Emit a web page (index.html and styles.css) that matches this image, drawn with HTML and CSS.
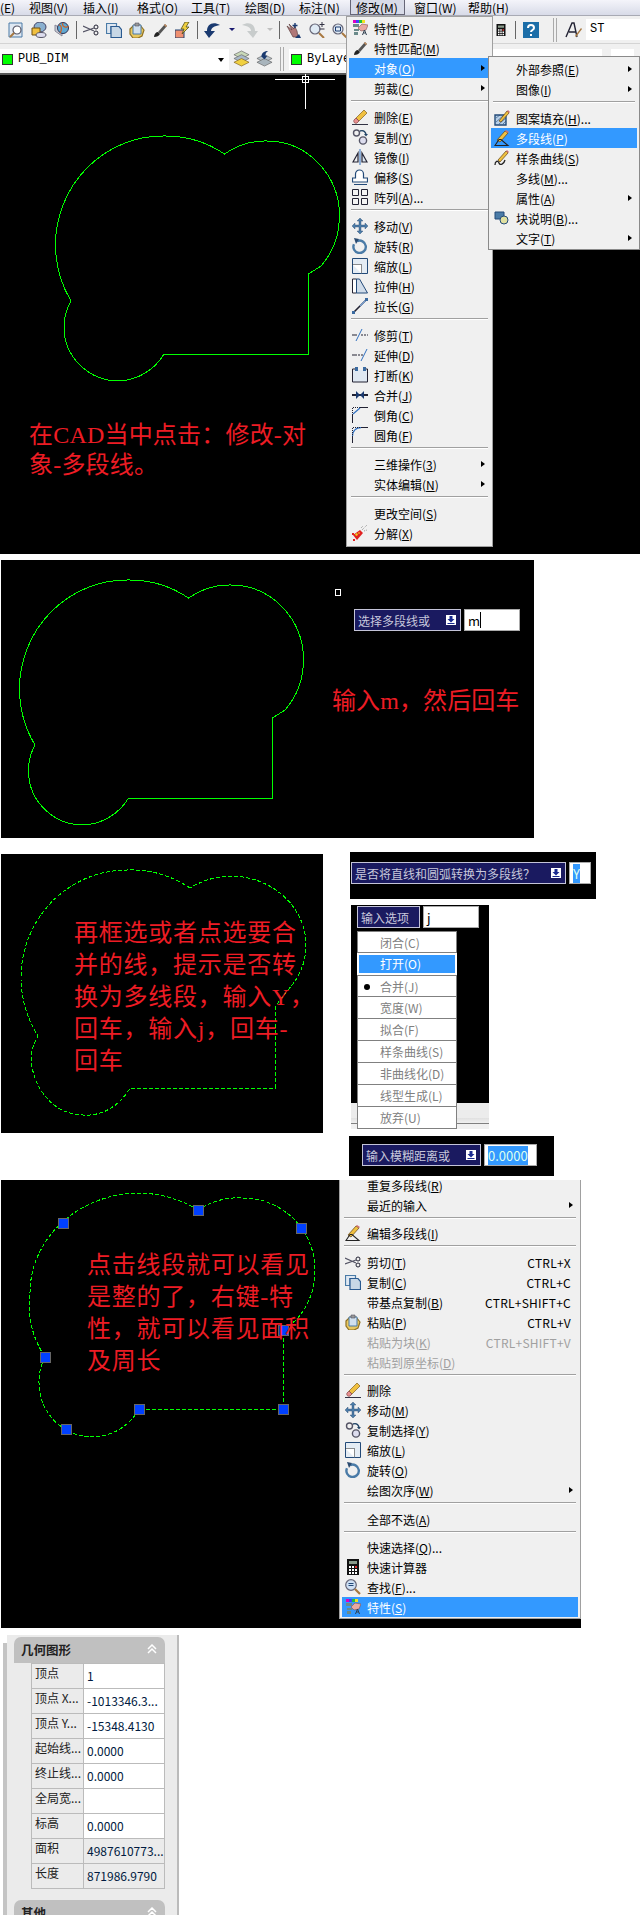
FILE: index.html
```html
<!DOCTYPE html>
<html lang="zh-CN">
<head>
    <meta charset="UTF-8">
    <meta name="viewport" content="width=device-width, initial-scale=1.0">
    <title>CAD 多段线合并</title>
    <link rel="stylesheet" href="styles.css">
</head>
<body>
    <svg class="icon-defs" xmlns="http://www.w3.org/2000/svg">
        <symbol id="i-props" viewBox="0 0 16 16">
            <rect x="1" y="0" width="3" height="3" fill="#e000c0"/><rect x="4" y="0" width="3" height="3" fill="#4040ff"/><rect x="7" y="0" width="3" height="3" fill="#20c040"/><rect x="10" y="0" width="3" height="3" fill="#f0e020"/>
            <path d="M1 4h6v3H1zM2 9h5v2H2zM2 12h4v3H2z" fill="#6a8a8a"/>
            <path d="M6 8l4-4 6 1-2 5-5 1z" fill="#e8a8a0" stroke="#805050" stroke-width=".6"/>
            <path d="M10.5 15l2-5 2 5M11.5 13h2" fill="none" stroke="#304050" stroke-width="1"/>
        </symbol>
        <symbol id="i-brush" viewBox="0 0 16 16">
            <path d="M2 15c0-3 2-5 4-5l2 2c-1 2-3 3-6 3z" fill="#222"/>
            <path d="M6 10l7-8 2 2-7 8z" fill="#555"/><path d="M12 3l1-1 2 2-1 1z" fill="#c89060"/>
        </symbol>
        <symbol id="i-erase" viewBox="0 0 16 16">
            <path d="M4 9l8-8 3 3-8 8z" fill="#f0c040" stroke="#806020" stroke-width=".7"/>
            <path d="M2 11l2-2 3 3-2 2c-2 1-4-1-3-3z" fill="#e89090" stroke="#804040" stroke-width=".7"/>
            <path d="M0 15.5h16" stroke="#334" stroke-width="1"/>
        </symbol>
        <symbol id="i-copyobj" viewBox="0 0 16 16">
            <circle cx="4.5" cy="4" r="3" fill="none" stroke="#556" stroke-width="1.4"/>
            <circle cx="11" cy="11.5" r="3.6" fill="#dde" stroke="#556" stroke-width="1.4"/>
            <path d="M8 2c3-1 5 0 6 3" fill="none" stroke="#246" stroke-width="1.4"/><path d="M12 5h4l-2 2.5z" fill="#246"/>
        </symbol>
        <symbol id="i-mirror" viewBox="0 0 16 16">
            <path d="M1 13L6 4v9z" fill="none" stroke="#223" stroke-width="1.2"/>
            <path d="M15 13L10 4v9z" fill="#dde6f0" stroke="#223" stroke-width="1.2"/>
            <path d="M8 0v16" stroke="#3070c0" stroke-width="1"/>
        </symbol>
        <symbol id="i-offset" viewBox="0 0 16 16">
            <path d="M.5 13V9h3V5a4 4 0 0 1 8 0v4h4v4z" fill="#fff" stroke="#234a78" stroke-width="1.2"/>
            <path d="M2 15.5h13" stroke="#234a78" stroke-width="1"/>
        </symbol>
        <symbol id="i-array" viewBox="0 0 16 16">
            <path d="M.5.5h6v6h-6zM9.5.5h6v6h-6zM.5 9.5h6v6h-6zM9.5 9.5h6v6h-6z" fill="#f4f4f4" stroke="#223" stroke-width="1"/>
        </symbol>
        <symbol id="i-move" viewBox="0 0 16 16">
            <path d="M8 0l3 3H9v4h4V5l3 3-3 3V9H9v4h2l-3 3-3-3h2V9H3v2L0 8l3-3v2h4V3H5z" fill="#4a7ba7" stroke="#2a4a70" stroke-width=".4"/>
        </symbol>
        <symbol id="i-rotate" viewBox="0 0 16 16">
            <path d="M5 3.2a6.2 6.2 0 1 1-3 3" fill="none" stroke="#4a7ba7" stroke-width="2.4"/>
            <path d="M2 0l5 1-3 5z" fill="#2a4a70"/>
        </symbol>
        <symbol id="i-scale" viewBox="0 0 16 16">
            <path d="M.5.5h15v15H.5z" fill="#e4ecf4" stroke="#234a78"/>
            <path d="M.5 6.5h9v9" fill="#fff" stroke="#222" stroke-dasharray="1 1"/>
        </symbol>
        <symbol id="i-stretch" viewBox="0 0 16 16">
            <path d="M.5 1h4v14h-4z" fill="#fff" stroke="#223"/>
            <path d="M4.5 1h3l8 14h-11z" fill="#d0dcea" stroke="#234a78"/>
        </symbol>
        <symbol id="i-length" viewBox="0 0 16 16">
            <path d="M2 14L14 2" stroke="#223" stroke-width="1.6"/><path d="M8 8l6-6" stroke="#7aa0d0" stroke-width="1.6"/>
            <path d="M0 13h3v3H0zM13 0h3v3h-3z" fill="#3a6aa0"/>
        </symbol>
        <symbol id="i-trim" viewBox="0 0 16 16">
            <path d="M0 8h5" stroke="#223"/><path d="M4 14L10 2" stroke="#3070c0"/><path d="M9 8h7" stroke="#223" stroke-dasharray="2 1"/>
        </symbol>
        <symbol id="i-extend" viewBox="0 0 16 16">
            <path d="M0 8h5" stroke="#223"/><path d="M6 8h5" stroke="#223" stroke-dasharray="2 1"/><path d="M9 14L15 2" stroke="#3070c0"/>
        </symbol>
        <symbol id="i-break" viewBox="0 0 16 16">
            <path d="M1 3h14v12H1z" fill="#dfe8f2"/><path d="M3 2H.5v13h15V2H13" fill="none" stroke="#223"/>
            <path d="M3 0h3v4H3zM11 0h3v4h-3z" fill="#3a6aa0"/>
        </symbol>
        <symbol id="i-join" viewBox="0 0 16 16">
            <path d="M0 8h16" stroke="#223" stroke-width="2"/><path d="M4 4l4 4-4 4zM12 4L8 8l4 4z" fill="#1a3a70"/>
        </symbol>
        <symbol id="i-chamfer" viewBox="0 0 16 16">
            <path d="M.5 16V8M8 .5h8" fill="none" stroke="#223"/><path d="M.5 8V.5H8" fill="none" stroke="#223" stroke-dasharray="1 1"/><path d="M1 7l7-6" stroke="#3070c0" stroke-width="1.2"/>
        </symbol>
        <symbol id="i-fillet" viewBox="0 0 16 16">
            <path d="M.5 16V9M9 .5h7" fill="none" stroke="#223"/><path d="M.5 9C.5 4 4 .5 9 .5" fill="none" stroke="#3070c0" stroke-width="1.3"/><path d="M.5 8V.5H8" fill="none" stroke="#223" stroke-dasharray="1 1"/>
        </symbol>
        <symbol id="i-explode" viewBox="0 0 16 16">
            <path d="M1 10l7-5 3 3-6 7z" fill="#e02020"/><path d="M3 9l2-1 1 2-2 1zM7 7l1 1-1 1-1-1z" fill="#f0d020"/>
            <path d="M10 5l5-5M12 6l3-1M9 3l2-2" stroke="#999" stroke-dasharray="1 1"/><path d="M1 14h2v2H1zM0 8h2v2H0z" fill="#e02020"/>
        </symbol>
        <symbol id="i-hatch" viewBox="0 0 16 16">
            <path d="M1 5h11v10H1z" fill="#b8d0e8" stroke="#234a78" stroke-width="1.4"/>
            <path d="M2 8l4-3M2 12l8-7M5 14l7-6M9 14l3-3" stroke="#234a78" stroke-width=".6"/>
            <path d="M5 11l8-10 2 2-8 9z" fill="#f0c040" stroke="#604010" stroke-width=".7"/><path d="M13 1l1-1 2 2-1 1z" fill="#d07070"/>
        </symbol>
        <symbol id="i-pline" viewBox="0 0 16 16">
            <path d="M3 10l8-9 3 2-8 9z" fill="#f0c040" stroke="#604010" stroke-width=".7"/><path d="M11 1l1-1 3 2-1 1z" fill="#d07070"/>
            <path d="M1 15.5l4-6h2l7 6z" fill="none" stroke="#222" stroke-width="1.1"/>
        </symbol>
        <symbol id="i-spline" viewBox="0 0 16 16">
            <path d="M4 10l8-9 2 2-8 9z" fill="#f0c040" stroke="#604010" stroke-width=".7"/><path d="M12 1l1-1 2 2-1 1z" fill="#d07070"/>
            <path d="M1 15c0-4 3-5 4-2s5 1 6-3" fill="none" stroke="#222" stroke-width="1.3"/>
        </symbol>
        <symbol id="i-block" viewBox="0 0 16 16">
            <path d="M1 2h9v7H1z" fill="#4a7ba7" stroke="#234a78"/><circle cx="10" cy="10" r="4" fill="#e0e0a0" stroke="#234a78"/>
        </symbol>
        <symbol id="i-cut" viewBox="0 0 16 16">
            <circle cx="13" cy="5" r="2" fill="none" stroke="#223"/><circle cx="13" cy="11" r="2" fill="none" stroke="#223"/>
            <path d="M0 4l11 5M0 10l11-4" stroke="#556" stroke-width="1.2"/>
        </symbol>
        <symbol id="i-doc" viewBox="0 0 16 16">
            <path d="M.5 1.5h10v3H5v7H.5z" fill="#dfe8f2" stroke="#4a7ba7" stroke-width="1.2"/>
            <path d="M5 4.5h8l2.5 3v8H5z" fill="#c8d8e6" stroke="#2a5a90" stroke-width="1.2"/>
        </symbol>
        <symbol id="i-paste" viewBox="0 0 16 16">
            <path d="M1 7l4-4h6l4 5-2 6-4 2H4L1 12z" fill="#e8c860" stroke="#907020" stroke-width="1.2"/>
            <path d="M4 3h8v9H4z" fill="#d0e0ee" stroke="#4a7ba7"/><path d="M6 1h4v3H6z" fill="#999" stroke="#556" stroke-width=".6"/>
        </symbol>
        <symbol id="i-calc" viewBox="0 0 16 16">
            <path d="M2 0h12v16H2z" fill="#111"/><path d="M4 2h8v3H4z" fill="#8a9a8a"/>
            <path d="M4 7h2v2H4zM7 7h2v2H7zM4 10h2v2H4zM7 10h2v2H7zM10 10h2v2h-2zM4 13h2v2H4zM7 13h2v2H7zM10 13h2v2h-2z" fill="#fff"/><path d="M10 7h2v2h-2z" fill="#e03030"/>
        </symbol>
        <symbol id="i-find" viewBox="0 0 16 16">
            <circle cx="6" cy="6" r="5.3" fill="#cfe0f4" stroke="#667" stroke-width="1.2"/>
            <path d="M10 10l5 5" stroke="#a87840" stroke-width="2.2"/><path d="M3.5 6.5h5M3.5 4.5h5" stroke="#234a78" stroke-width="1"/>
        </symbol>
        <symbol id="i-preview" viewBox="0 0 16 16">
            <path d="M1 1h13v14H1z" fill="#dfe8f2" stroke="#4a7ba7"/><circle cx="9" cy="8" r="4" fill="#fff" stroke="#556" stroke-width="1.2"/><path d="M6 11l-4 4" stroke="#a87840" stroke-width="2"/>
        </symbol>
        <symbol id="i-publish" viewBox="0 0 16 16">
            <ellipse cx="9" cy="5" rx="6" ry="5" fill="#8ab0d0" stroke="#446"/><path d="M1 6h8v7H1z" fill="#f0c040" stroke="#705010"/><ellipse cx="10" cy="13" rx="5" ry="2.5" fill="#dde" stroke="#556"/>
        </symbol>
        <symbol id="i-globe" viewBox="0 0 16 16">
            <path d="M1 9l7 5V7L1 3z" fill="#c8ccd4" stroke="#889"/><circle cx="9" cy="6" r="5.5" fill="#60a8d0" stroke="#335"/><path d="M5 3c3 0 3 6 1 8M9 1c-2 3 4 6 5 3" fill="none" stroke="#d06020" stroke-width="1.2"/>
        </symbol>
        <symbol id="i-match" viewBox="0 0 16 16">
            <path d="M0 8h9v8H0z" fill="#f09070" stroke="#204070"/><path d="M10 0L6 7h3l-2 5 7-7h-3l3-5z" fill="#f0d040" stroke="#505020" stroke-width=".8"/>
        </symbol>
        <symbol id="i-undo" viewBox="0 0 16 16">
            <path d="M16 3C9-1 3 2 3 9H0l5 7 6-7H7c0-3 3-5 9-6z" fill="#1a3a70"/>
        </symbol>
        <symbol id="i-redo" viewBox="0 0 16 16">
            <path d="M0 3c7-4 13-1 13 6h3l-5 7-6-7h4c0-3-3-5-9-6z" fill="#c8cccc"/>
        </symbol>
        <symbol id="i-hand" viewBox="0 0 16 16">
            <path d="M1 4l5 4-3-6 5 5V3l3 6 1 6H7z" fill="#b07878" stroke="#604040" stroke-width=".7"/>
            <path d="M9 6V1M6.5 3.5h5" stroke="#1a3a70" stroke-width="1.4"/><path d="M9 16l4-4 2 4z" fill="#1a3a70"/>
        </symbol>
        <symbol id="i-zoom" viewBox="0 0 16 16">
            <circle cx="6" cy="7" r="5" fill="#dfeaf4" stroke="#667" stroke-width="1.2"/><path d="M10 11l5 5" stroke="#a87840" stroke-width="2"/><path d="M13 0v5M10.5 2.5h5M10.5 7h5" stroke="#334"/>
        </symbol>
        <symbol id="i-zoomwin" viewBox="0 0 16 16">
            <circle cx="6" cy="7" r="5" fill="#dfeaf4" stroke="#667" stroke-width="1.2"/><path d="M3.5 5h5v4h-5z" fill="none" stroke="#1a3a70"/><path d="M10 11l5 5" stroke="#a87840" stroke-width="2"/>
        </symbol>
        <symbol id="i-help" viewBox="0 0 16 16">
            <path d="M0 0h16v16H0z" fill="#1c6ea8"/><path d="M5 6c0-4 6-4 6 0 0 2-3 2-3 4" fill="none" stroke="#fff" stroke-width="2"/><path d="M7 12h2v2H7z" fill="#fff"/>
        </symbol>
        <symbol id="i-text" viewBox="0 0 18 18">
            <path d="M1 16L7 2h2l3 14M4 11h7" fill="none" stroke="#223" stroke-width="1.4"/><path d="M10 15l6-8 1 1-6 8z" fill="#a87840"/>
        </symbol>
        <symbol id="i-layers" viewBox="0 0 18 18">
            <path d="M9 1l8 4-8 4-8-4z" fill="#c8d8b8" stroke="#666" stroke-width=".7"/><path d="M9 5l8 4-8 4-8-4z" fill="#a8b8c8" stroke="#666" stroke-width=".7"/><path d="M9 9l8 4-8 4-8-4z" fill="#f0d040" stroke="#806020" stroke-width=".7"/>
        </symbol>
        <symbol id="i-layerprev" viewBox="0 0 18 18">
            <path d="M9 5l8 4-8 4-8-4z" fill="#b8c4cc" stroke="#666" stroke-width=".7"/><path d="M9 9l8 4-8 4-8-4z" fill="#a8b4bc" stroke="#666" stroke-width=".7"/><path d="M6 6c0-3 3-5 7-5-2 1-3 2-3 5h2l-3 4-4-4z" fill="#1a3a70"/>
        </symbol>
        <symbol id="i-pin" viewBox="0 0 10 10">
            <path d="M0 0h10v10H0z" fill="#fff"/><path d="M3.5 1h3v3h2L5 7.5 1.5 4h2zM1.5 8h7v1h-7z" fill="#1a2a90"/>
        </symbol>
        <symbol id="i-fold" viewBox="0 0 10 10">
            <path d="M1 5l4-4 4 4M1 9l4-4 4 4" fill="none" stroke="#fff" stroke-width="1.5"/>
        </symbol>
    </svg>

    <section class="shot shot-main">
        <div class="menubar">
            <span class="menubar-item menubar-first">(E)</span>
            <span class="menubar-item">视图(V)</span>
            <span class="menubar-item">插入(I)</span>
            <span class="menubar-item">格式(O)</span>
            <span class="menubar-item">工具(T)</span>
            <span class="menubar-item">绘图(D)</span>
            <span class="menubar-item">标注(N)</span>
            <span class="menubar-item is-open">修改(M)</span>
            <span class="menubar-item">窗口(W)</span>
            <span class="menubar-item">帮助(H)</span>
        </div>
        <div class="toolbar">
            <svg class="tool"><use href="#i-preview"/></svg>
            <svg class="tool"><use href="#i-publish"/></svg>
            <svg class="tool"><use href="#i-globe"/></svg>
            <span class="tool-sep"></span>
            <svg class="tool"><use href="#i-cut"/></svg>
            <svg class="tool"><use href="#i-doc"/></svg>
            <svg class="tool"><use href="#i-paste"/></svg>
            <svg class="tool"><use href="#i-brush"/></svg>
            <svg class="tool"><use href="#i-match"/></svg>
            <span class="tool-sep"></span>
            <svg class="tool"><use href="#i-undo"/></svg>
            <span class="tool-drop"></span>
            <svg class="tool"><use href="#i-redo"/></svg>
            <span class="tool-drop is-off"></span>
            <span class="tool-sep"></span>
            <svg class="tool"><use href="#i-hand"/></svg>
            <svg class="tool"><use href="#i-zoom"/></svg>
            <svg class="tool"><use href="#i-zoomwin"/></svg>
            <div class="toolbar-right">
                <svg class="tool tool-calc"><use href="#i-calc"/></svg>
                <span class="tool-sep"></span>
                <svg class="tool"><use href="#i-help"/></svg>
                <span class="tool-grip"></span>
                <svg class="tool tool-text"><use href="#i-text"/></svg>
                <span class="style-box">ST</span>
            </div>
        </div>
        <div class="toolbar toolbar-layers">
            <div class="layer-select">
                <span class="swatch"></span>
                <span class="layer-name">PUB_DIM</span>
                <span class="select-arrow"></span>
            </div>
            <svg class="tool tool-layer"><use href="#i-layers"/></svg>
            <svg class="tool tool-layer"><use href="#i-layerprev"/></svg>
            <span class="tool-grip"></span>
            <div class="layer-select layer-select-color">
                <span class="swatch"></span>
                <span class="layer-name">ByLayer</span>
            </div>
            <span class="select-gap"></span>
            <div class="layer-select layer-select-end"></div>
        </div>

        <svg class="drawing" viewBox="0 0 640 554">
            <path class="outline" d="M224.5 154A107.5 109 0 0 0 163 136A107.5 109 0 0 0 55.5 245A107.5 109 0 0 0 71 301A55 54 0 0 0 64 327A55 54 0 0 0 119 381A55 54 0 0 0 164 354H308.5V274L321 266A72.5 75 0 0 0 339.5 216A72.5 75 0 0 0 267 141A72.5 75 0 0 0 224.5 154Z"/>
            <path class="crosshair" d="M275 79.5H335M305.5 74V109"/>
            <rect class="cross-box" x="302.5" y="76.5" width="6" height="6"/>
        </svg>
        <p class="caption caption-main">在CAD当中点击：修改-对<br>象-多段线。</p>

        <div class="menu menu-modify">
            <div class="menu-item"><svg class="icon"><use href="#i-props"/></svg>特性(<u>P</u>)</div>
            <div class="menu-item"><svg class="icon"><use href="#i-brush"/></svg>特性匹配(<u>M</u>)</div>
            <div class="menu-item is-active">对象(<u>O</u>)<span class="menu-arrow"></span></div>
            <div class="menu-item">剪裁(<u>C</u>)<span class="menu-arrow"></span></div>
            <div class="menu-sep"></div>
            <div class="menu-item"><svg class="icon"><use href="#i-erase"/></svg>删除(<u>E</u>)</div>
            <div class="menu-item"><svg class="icon"><use href="#i-copyobj"/></svg>复制(<u>Y</u>)</div>
            <div class="menu-item"><svg class="icon"><use href="#i-mirror"/></svg>镜像(<u>I</u>)</div>
            <div class="menu-item"><svg class="icon"><use href="#i-offset"/></svg>偏移(<u>S</u>)</div>
            <div class="menu-item"><svg class="icon"><use href="#i-array"/></svg>阵列(<u>A</u>)...</div>
            <div class="menu-sep"></div>
            <div class="menu-item"><svg class="icon"><use href="#i-move"/></svg>移动(<u>V</u>)</div>
            <div class="menu-item"><svg class="icon"><use href="#i-rotate"/></svg>旋转(<u>R</u>)</div>
            <div class="menu-item"><svg class="icon"><use href="#i-scale"/></svg>缩放(<u>L</u>)</div>
            <div class="menu-item"><svg class="icon"><use href="#i-stretch"/></svg>拉伸(<u>H</u>)</div>
            <div class="menu-item"><svg class="icon"><use href="#i-length"/></svg>拉长(<u>G</u>)</div>
            <div class="menu-sep"></div>
            <div class="menu-item"><svg class="icon"><use href="#i-trim"/></svg>修剪(<u>T</u>)</div>
            <div class="menu-item"><svg class="icon"><use href="#i-extend"/></svg>延伸(<u>D</u>)</div>
            <div class="menu-item"><svg class="icon"><use href="#i-break"/></svg>打断(<u>K</u>)</div>
            <div class="menu-item"><svg class="icon"><use href="#i-join"/></svg>合并(<u>J</u>)</div>
            <div class="menu-item"><svg class="icon"><use href="#i-chamfer"/></svg>倒角(<u>C</u>)</div>
            <div class="menu-item"><svg class="icon"><use href="#i-fillet"/></svg>圆角(<u>F</u>)</div>
            <div class="menu-sep"></div>
            <div class="menu-item">三维操作(<u>3</u>)<span class="menu-arrow"></span></div>
            <div class="menu-item">实体编辑(<u>N</u>)<span class="menu-arrow"></span></div>
            <div class="menu-sep"></div>
            <div class="menu-item">更改空间(<u>S</u>)</div>
            <div class="menu-item"><svg class="icon"><use href="#i-explode"/></svg>分解(<u>X</u>)</div>
        </div>

        <div class="menu menu-object">
            <div class="menu-item">外部参照(<u>E</u>)<span class="menu-arrow"></span></div>
            <div class="menu-item">图像(<u>I</u>)<span class="menu-arrow"></span></div>
            <div class="menu-sep"></div>
            <div class="menu-item"><svg class="icon"><use href="#i-hatch"/></svg>图案填充(<u>H</u>)...</div>
            <div class="menu-item is-active"><svg class="icon"><use href="#i-pline"/></svg>多段线(<u>P</u>)</div>
            <div class="menu-item"><svg class="icon"><use href="#i-spline"/></svg>样条曲线(<u>S</u>)</div>
            <div class="menu-item">多线(<u>M</u>)...</div>
            <div class="menu-item">属性(<u>A</u>)<span class="menu-arrow"></span></div>
            <div class="menu-item"><svg class="icon"><use href="#i-block"/></svg>块说明(<u>B</u>)...</div>
            <div class="menu-item">文字(<u>T</u>)<span class="menu-arrow"></span></div>
        </div>
    </section>

    <section class="shot shot-select">
        <svg class="drawing" viewBox="1 560 533 278">
            <path class="outline" d="M188.5 598A107.5 109 0 0 0 127 580A107.5 109 0 0 0 19.5 689A107.5 109 0 0 0 35 745A55 54 0 0 0 28.5 771A55 54 0 0 0 83 825A55 54 0 0 0 128.5 798H272.5V718L285 710A72.5 75 0 0 0 303.5 660A72.5 75 0 0 0 231 585A72.5 75 0 0 0 188.5 598Z"/>
            <rect class="cross-box" x="335.5" y="589.5" width="5" height="6"/>
        </svg>
        <div class="prompt-line prompt-line-select">
            <div class="prompt prompt-select">选择多段线或<svg class="pin"><use href="#i-pin"/></svg></div>
            <div class="prompt-input prompt-input-m">m<span class="caret"></span></div>
        </div>
        <p class="caption caption-enter">输入m，然后回车</p>
    </section>

    <div class="steps-row">
        <section class="shot shot-dashed">
            <svg class="drawing" viewBox="1 854 322 279">
                <path class="outline is-dashed" d="M190 888A106 108 0 0 0 127 870A106 108 0 0 0 21 978A106 108 0 0 0 38 1036A52 60 0 0 0 31 1055A52 60 0 0 0 83 1115A52 60 0 0 0 130 1088H275V1007L287 991A76 69 0 0 0 306 945A76 69 0 0 0 230 876A76 69 0 0 0 190 888Z"/>
            </svg>
            <p class="caption caption-dashed">再框选或者点选要合<br>并的线，提示是否转<br>换为多线段，输入Y，<br>回车，输入j，回车-<br>回车</p>
        </section>
        <div class="steps-side">
            <div class="prompt-box box-convert">
                <div class="prompt prompt-convert">是否将直线和圆弧转换为多段线？<svg class="pin"><use href="#i-pin"/></svg></div>
                <div class="prompt-input prompt-input-y"><span class="selected">Y</span></div>
            </div>
            <div class="prompt-box box-options">
                <div class="prompt-line">
                    <div class="prompt prompt-options">输入选项</div>
                    <div class="prompt-input prompt-input-j">j</div>
                </div>
                <div class="option-list">
                    <div class="option option-first">闭合(C)</div>
                    <div class="option is-active">打开(O)</div>
                    <div class="option is-checked">合并(J)</div>
                    <div class="option">宽度(W)</div>
                    <div class="option">拟合(F)</div>
                    <div class="option">样条曲线(S)</div>
                    <div class="option">非曲线化(D)</div>
                    <div class="option">线型生成(L)</div>
                    <div class="option">放弃(U)</div>
                </div>
            </div>
            <div class="prompt-box box-fuzz">
                <div class="prompt prompt-fuzz">输入模糊距离或<svg class="pin"><use href="#i-pin"/></svg></div>
                <div class="prompt-input prompt-input-fuzz"><span class="selected">0.0000</span></div>
            </div>
        </div>
    </div>

    <section class="shot shot-grips">
        <svg class="drawing" viewBox="1 1180 580 448">
            <path class="outline is-dashed" d="M198 1210A110 100 0 0 0 140 1193A110 100 0 0 0 30 1293A110 100 0 0 0 45 1357A54 54 0 0 0 39 1383A54 54 0 0 0 93 1437A54 54 0 0 0 139 1409H283V1330L296 1320A72 72 0 0 0 315 1270A72 72 0 0 0 243 1198A72 72 0 0 0 198 1210Z"/>
            <g class="grips">
                <rect x="58.5" y="1218.5" width="10" height="10"/>
                <rect x="193.5" y="1205.5" width="10" height="10"/>
                <rect x="296.5" y="1223.5" width="10" height="10"/>
                <rect x="278.5" y="1325.5" width="10" height="10"/>
                <rect x="278.5" y="1404.5" width="10" height="10"/>
                <rect x="134.5" y="1404.5" width="10" height="10"/>
                <rect x="61.5" y="1424.5" width="10" height="10"/>
                <rect x="40.5" y="1352.5" width="10" height="10"/>
            </g>
        </svg>
        <p class="caption caption-grips">点击线段就可以看见<br>是整的了，右键-特<br>性，就可以看见面积<br>及周长</p>

        <div class="menu menu-context">
            <div class="menu-item menu-item-first">重复多段线(<u>R</u>)</div>
            <div class="menu-item">最近的输入<span class="menu-arrow"></span></div>
            <div class="menu-sep"></div>
            <div class="menu-item"><svg class="icon"><use href="#i-pline"/></svg>编辑多段线(<u>I</u>)</div>
            <div class="menu-sep"></div>
            <div class="menu-item"><svg class="icon"><use href="#i-cut"/></svg>剪切(<u>T</u>)<span class="menu-key">CTRL+X</span></div>
            <div class="menu-item"><svg class="icon"><use href="#i-doc"/></svg>复制(<u>C</u>)<span class="menu-key">CTRL+C</span></div>
            <div class="menu-item">带基点复制(<u>B</u>)<span class="menu-key">CTRL+SHIFT+C</span></div>
            <div class="menu-item"><svg class="icon"><use href="#i-paste"/></svg>粘贴(<u>P</u>)<span class="menu-key">CTRL+V</span></div>
            <div class="menu-item is-disabled">粘贴为块(<u>K</u>)<span class="menu-key">CTRL+SHIFT+V</span></div>
            <div class="menu-item is-disabled">粘贴到原坐标(<u>D</u>)</div>
            <div class="menu-sep"></div>
            <div class="menu-item"><svg class="icon"><use href="#i-erase"/></svg>删除</div>
            <div class="menu-item"><svg class="icon"><use href="#i-move"/></svg>移动(<u>M</u>)</div>
            <div class="menu-item"><svg class="icon"><use href="#i-copyobj"/></svg>复制选择(<u>Y</u>)</div>
            <div class="menu-item"><svg class="icon"><use href="#i-scale"/></svg>缩放(<u>L</u>)</div>
            <div class="menu-item"><svg class="icon"><use href="#i-rotate"/></svg>旋转(<u>O</u>)</div>
            <div class="menu-item">绘图次序(<u>W</u>)<span class="menu-arrow"></span></div>
            <div class="menu-sep"></div>
            <div class="menu-item">全部不选(<u>A</u>)</div>
            <div class="menu-sep"></div>
            <div class="menu-item">快速选择(<u>Q</u>)...</div>
            <div class="menu-item"><svg class="icon"><use href="#i-calc"/></svg>快速计算器</div>
            <div class="menu-item"><svg class="icon"><use href="#i-find"/></svg>查找(<u>F</u>)...</div>
            <div class="menu-item is-active"><svg class="icon"><use href="#i-props"/></svg>特性(<u>S</u>)</div>
        </div>
    </section>

    <div class="props-wrap">
        <span class="props-edge"></span>
        <div class="props">
            <div class="props-head">几何图形<svg class="props-fold"><use href="#i-fold"/></svg></div>
            <table class="props-table">
                <tr><th>顶点</th><td>1</td></tr>
                <tr><th>顶点 X...</th><td>-1013346.3...</td></tr>
                <tr><th>顶点 Y...</th><td>-15348.4130</td></tr>
                <tr><th>起始线...</th><td>0.0000</td></tr>
                <tr><th>终止线...</th><td>0.0000</td></tr>
                <tr><th>全局宽...</th><td></td></tr>
                <tr><th>标高</th><td>0.0000</td></tr>
                <tr><th>面积</th><td class="is-readonly">4987610773...</td></tr>
                <tr><th>长度</th><td class="is-readonly">871986.9790</td></tr>
            </table>
            <div class="props-head props-head-next">其他<svg class="props-fold"><use href="#i-fold"/></svg></div>
        </div>
    </div>
</body>
</html>
```

FILE: styles.css
```css
html, body {
    margin: 0;
    height: 1915px;
    overflow: hidden;
    background: #fff;
}

body {
    font-family: "Noto Sans CJK SC", "Noto Sans", sans-serif;
    font-size: 12px;
    color: #000;
}

.icon-defs {
    position: absolute;
    width: 0;
    height: 0;
}

.shot {
    position: relative;
    background: #000;
}

.shot-main {
    height: 554px;
}

.shot-select {
    width: 533px;
    height: 278px;
    margin: 6px 0 0 1px;
}

.shot-dashed {
    width: 322px;
    height: 279px;
    margin: 2px 0 0 1px;
}

.shot-grips {
    width: 580px;
    height: 448px;
    margin: 4px 0 0 1px;
}

.drawing {
    position: absolute;
    left: 0;
    top: 0;
    width: 100%;
    height: 100%;
}

.outline {
    fill: none;
    stroke: #00ff00;
    stroke-width: 1;
    shape-rendering: crispEdges;
}

.outline.is-dashed {
    stroke-dasharray: 4 2;
}

.crosshair {
    fill: none;
    stroke: #fff;
    stroke-width: 1;
}

.cross-box {
    fill: none;
    stroke: #fff;
    stroke-width: 1;
}

.grips rect {
    fill: #0040ff;
    stroke: #666;
    stroke-width: 1;
}

.caption {
    position: absolute;
    margin: 0;
    font-family: "Liberation Serif", "Noto Sans CJK SC", serif;
    font-size: 24px;
    line-height: 32px;
    letter-spacing: 0.75px;
    color: #ed1c24;
    white-space: nowrap;
}

.caption-main {
    left: 29px;
    top: 420px;
    line-height: 30px;
    letter-spacing: 0.2px;
}

.caption-enter {
    left: 331px;
    top: 125px;
    letter-spacing: 0.1px;
}

.caption-dashed {
    left: 73px;
    top: 63px;
}

.caption-grips {
    left: 86px;
    top: 69px;
}

/* title bar and toolbars of the first shot */
.menubar {
    display: flex;
    height: 15px;
    line-height: 15px;
    background: linear-gradient(#f4f4fa, #d8dbe8);
    border-bottom: 1px solid #a8aab4;
    overflow: hidden;
}

.menubar-item {
    flex: none;
    width: 39px;
    margin-right: 15px;
    white-space: nowrap;
}

.menubar-first {
    width: 14px;
    margin-right: 15px;
}

.menubar-item.is-open {
    width: 43px;
    margin: 0 9px 0 -3px;
    padding: 0 5px;
    height: 14px;
    border: 1px solid #667;
    border-top: 0;
    background: #d8dbe8;
}

.toolbar {
    display: flex;
    align-items: center;
    height: 27px;
    padding-left: 8px;
    background: #f0f0f0;
    border-bottom: 1px solid #d4d4d4;
}

.toolbar-right {
    display: flex;
    align-items: center;
    margin-left: auto;
}

.tool {
    flex: none;
    width: 16px;
    height: 16px;
    margin-right: 7px;
}

.tool-calc {
    width: 12px;
}

.tool-text {
    width: 18px;
    height: 18px;
    margin-right: 3px;
}

.tool-sep {
    flex: none;
    width: 1px;
    height: 18px;
    margin: 0 6px 0 -1px;
    background: #666;
}

.toolbar-right .tool-sep {
    margin: 0 7px 0 1px;
}

.tool-drop {
    flex: none;
    width: 0;
    height: 0;
    margin: 0 7px 0 2px;
    border: 3px solid transparent;
    border-top: 3px solid #1a1a70;
    border-bottom: 0;
}

.tool-drop.is-off {
    border-top-color: #c0c0c0;
}

.tool-grip {
    flex: none;
    width: 2px;
    height: 24px;
    margin: 0 8px 0 7px;
    border-left: 1px solid #aaa;
    border-right: 1px solid #aaa;
}

.style-box {
    width: 54px;
    height: 21px;
    line-height: 21px;
    padding-left: 4px;
    box-sizing: border-box;
    background: #fff;
    font-family: "Liberation Mono", monospace;
    font-size: 12px;
}

.toolbar-layers {
    height: 29px;
    padding-left: 0;
    border-bottom: 2px solid #555;
    box-sizing: content-box;
}

.layer-select {
    flex: none;
    position: relative;
    display: flex;
    align-items: center;
    width: 229px;
    height: 21px;
    margin-top: 1px;
    background: #fff;
    overflow: hidden;
}

.layer-select-color {
    width: 313px;
    margin-left: -3px;
}

.layer-select-end {
    width: 23px;
}

.select-gap {
    flex: none;
    width: 9px;
}

.swatch {
    flex: none;
    width: 9px;
    height: 9px;
    margin: 0 5px 0 2px;
    background: #00ff00;
    border: 1px solid #333;
    box-sizing: content-box;
}

.layer-name {
    font-family: "Liberation Mono", monospace;
    font-size: 12px;
}

.select-arrow {
    position: absolute;
    right: 5px;
    top: 9px;
    border: 3.5px solid transparent;
    border-top: 4px solid #000;
    border-bottom: 0;
}

.tool-layer {
    width: 17px;
    height: 17px;
    margin: 0 0 0 4px;
}

.tool-layer + .tool-layer {
    margin-left: 6px;
}

/* popup menus */
.menu {
    position: absolute;
    box-sizing: border-box;
    background: #f0f0f0;
    border: 1px solid #a0a0a0;
    white-space: nowrap;
}

.menu-modify {
    left: 346px;
    top: 16px;
    width: 147px;
    height: 531px;
    padding: 1px 2px;
}

.menu-object {
    left: 488px;
    top: 56px;
    width: 152px;
    height: 194px;
    padding: 2px;
    border-color: #8a8a8a;
}

.menu-context {
    left: 338px;
    top: 0;
    width: 242px;
    height: 439px;
    padding: 0 2px;
    border-top: 0;
}

.menu-item {
    position: relative;
    display: flex;
    align-items: center;
    height: 20px;
    padding-left: 25px;
    padding-top: 1px;
    box-sizing: border-box;
}

.menu-item-first {
    align-items: flex-start;
    height: 15px;
    padding-top: 0;
    line-height: 12px;
}

.menu-item .icon {
    position: absolute;
    left: 3px;
    top: 2px;
    width: 16px;
    height: 16px;
}

.menu-item.is-active {
    background: #3399ff;
    color: #fff;
}

.menu-item.is-disabled {
    color: #a0a0a0;
}

.menu-arrow {
    position: absolute;
    right: 5px;
    top: 7px;
    border: 3.5px solid transparent;
    border-left: 4px solid #000;
    border-right: 0;
}

.menu-key {
    margin-left: auto;
    padding-right: 7px;
    letter-spacing: 0.25px;
}

.menu-sep {
    height: 1px;
    margin: 2px 2px 5px;
    background: #a0a0a0;
    border-bottom: 1px solid #fff;
}

.menu-context .menu-sep {
    margin-bottom: 4.4px;
}

/* command prompts */
.prompt-line {
    display: flex;
    gap: 3px;
}

.prompt-line-select {
    position: absolute;
    left: 353px;
    top: 49px;
}

.prompt {
    display: flex;
    align-items: center;
    justify-content: space-between;
    height: 22px;
    padding: 0 3px;
    box-sizing: border-box;
    background: #1a1a60;
    border: 1px solid #c4c4d8;
    color: #c8c8dc;
    white-space: nowrap;
}

.prompt-select {
    width: 107px;
}

.prompt-convert {
    width: 215px;
}

.prompt-options {
    width: 63px;
}

.prompt-fuzz {
    width: 119px;
}

.pin {
    flex: none;
    width: 10px;
    height: 10px;
    margin-right: 1px;
}

.prompt-input {
    display: flex;
    align-items: center;
    height: 22px;
    padding-left: 3px;
    box-sizing: border-box;
    background: #fff;
    border: 1px solid #aaa;
    font-size: 13px;
}

.prompt-input-m {
    width: 56px;
}

.prompt-input-y {
    width: 22px;
}

.prompt-input-j {
    width: 56px;
}

.prompt-input-fuzz {
    width: 53px;
}

.caret {
    width: 1px;
    height: 16px;
    background: #000;
}

.selected {
    background: #3399ff;
    color: #dfe;
}

.steps-row {
    display: flex;
    margin-top: 14px;
}

.steps-side {
    margin-left: 26px;
}

.prompt-box {
    background: #000;
}

.box-convert {
    display: flex;
    gap: 3px;
    width: 246px;
    height: 47px;
    margin-left: 1px;
    padding: 10px 0 0 1px;
    box-sizing: border-box;
}

.box-options {
    width: 138px;
    height: 224px;
    margin: 6px 0 0 2px;
    padding: 1px 0 0 6px;
    box-sizing: border-box;
    background: linear-gradient(#000 198px, #ececec 198px, #ececec 213px, #e0e0e0 213px, #f0f0f0 218px, #808080 218px, #808080 219px, #f0f0f0 219px);
}

.box-fuzz {
    display: flex;
    gap: 3px;
    width: 205px;
    height: 40px;
    margin-top: 7px;
    padding: 8px 0 0 13px;
    box-sizing: border-box;
}

.option-list {
    width: 100px;
    margin-top: 3px;
    color: #808080;
}

.option {
    position: relative;
    height: 22px;
    line-height: 21px;
    padding-left: 22px;
    box-sizing: border-box;
    background: #fff;
    border: 1px solid #808080;
    border-top: 0;
}

.option-first {
    border-top: 1px solid #808080;
}

.option.is-active {
    margin: 1px;
    height: 20px;
    line-height: 18px;
    padding-left: 21px;
    border: 1px solid #fff;
    outline: 1px solid #fff;
    background: #3399ff;
    color: #fff;
}

.option.is-active + .option {
    border-top: 1px solid #808080;
}

.option.is-checked::before {
    content: "";
    position: absolute;
    left: 6px;
    top: 8px;
    width: 6px;
    height: 6px;
    border-radius: 50%;
    background: #000;
}

/* properties palette */
.props-wrap {
    display: flex;
    margin-top: 7px;
    height: 280px;
}

.props-edge {
    flex: none;
    width: 4px;
    margin: 8px 0 0 3px;
    background: #c4c4c4;
}

.props {
    width: 172px;
    padding: 2px 0 0 7px;
    box-sizing: border-box;
    background: #ebebeb;
    border-right: 2px solid #bbb;
}

.props-head {
    position: relative;
    width: 151px;
    height: 26px;
    line-height: 25px;
    padding-left: 7px;
    box-sizing: border-box;
    background: #c0c0c0;
    border-radius: 7px 7px 0 0;
    font-weight: 700;
    font-size: 12.5px;
    color: #222;
}

.props-head-next {
    margin-top: 11px;
}

.props-fold {
    position: absolute;
    right: 8px;
    top: 7px;
    width: 10px;
    height: 10px;
}

.props-table {
    width: 134px;
    margin-left: 17px;
    border-collapse: collapse;
    table-layout: fixed;
}

.props-table th,
.props-table td {
    height: 16px;
    line-height: 16px;
    border: 1px solid #bbb;
    font-weight: 400;
    text-align: left;
    white-space: nowrap;
    overflow: hidden;
}

.props-table th {
    width: 48px;
    padding: 1px 0 7px 3px;
    color: #222;
}

.props-table td {
    padding: 4px 0 4px 3px;
    background: #fff;
    color: #001a40;
}

.props-table td.is-readonly {
    background: #ebebeb;
}
```
